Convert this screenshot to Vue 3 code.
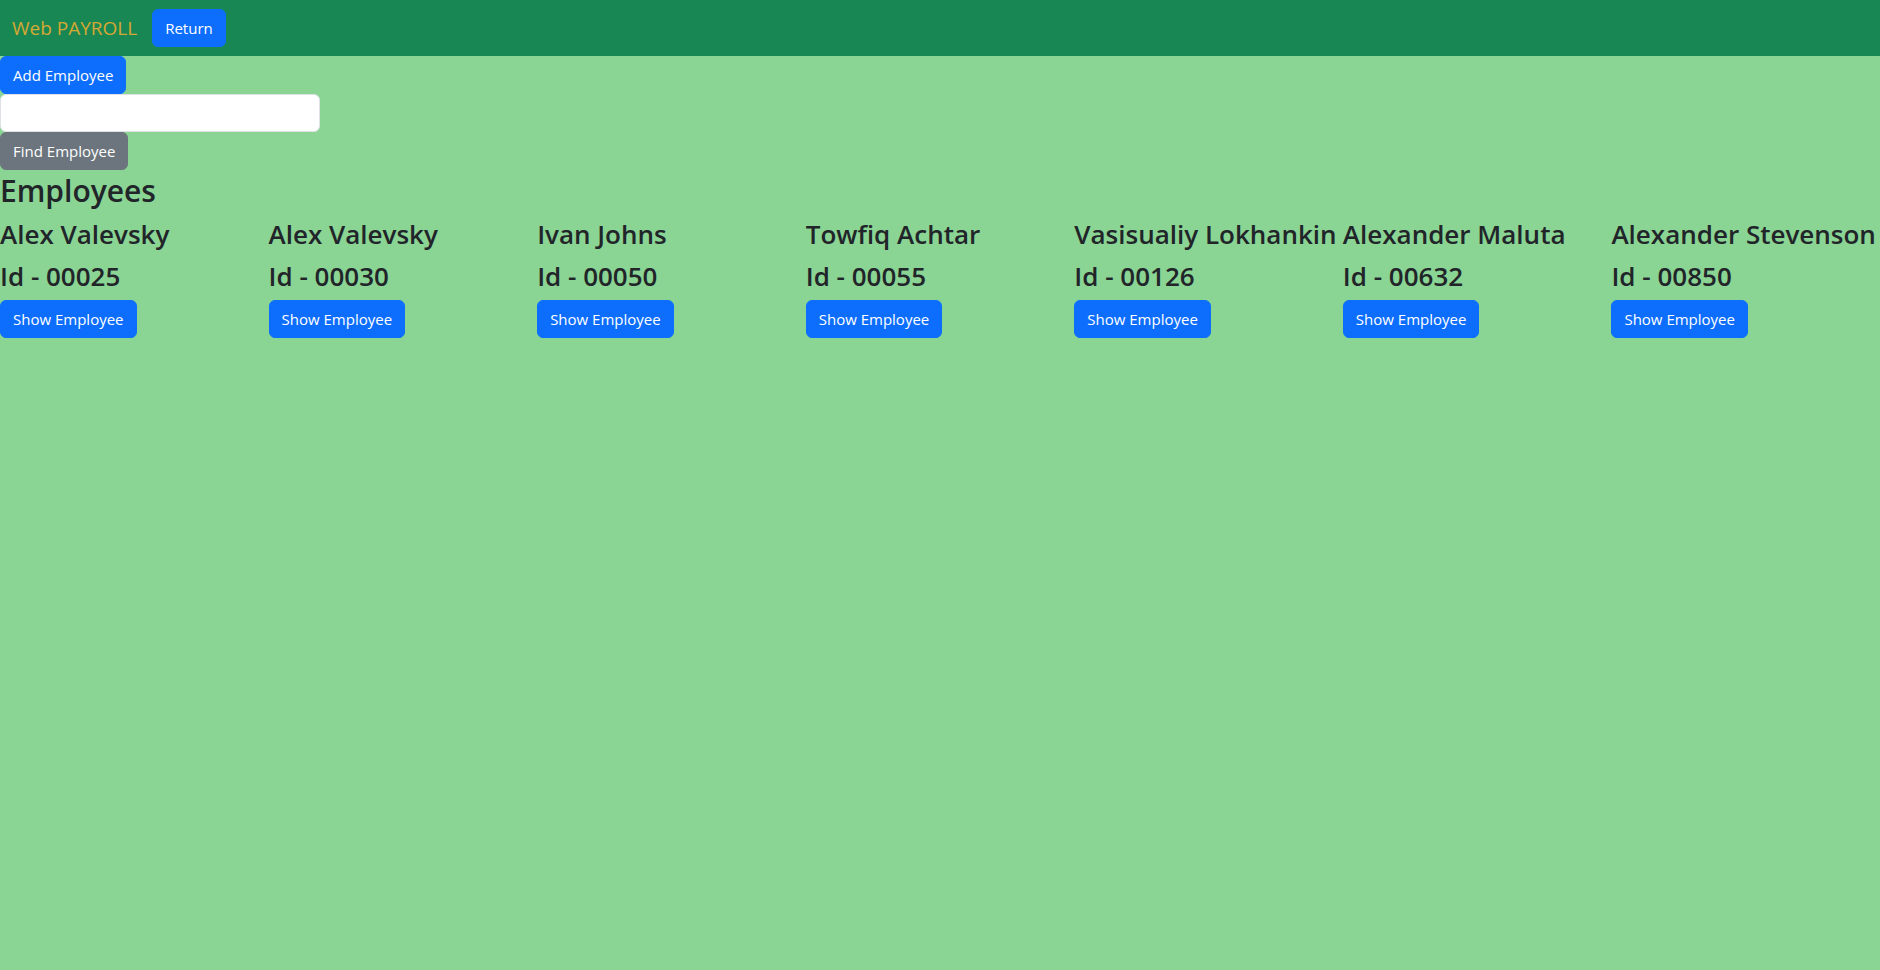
<script setup>
import { ref } from 'vue'

const query = ref('')
const employees = [
  { id: '00025', name: 'Alex Valevsky' },
  { id: '00030', name: 'Alex Valevsky' },
  { id: '00050', name: 'Ivan Johns' },
  { id: '00055', name: 'Towfiq Achtar' },
  { id: '00126', name: 'Vasisualiy Lokhankin' },
  { id: '00632', name: 'Alexander Maluta' },
  { id: '00850', name: 'Alexander Stevenson' },
]
</script>

<template>
  <div class="page">
    <nav class="navbar">
      <a class="brand" href="#">Web PAYROLL</a>
      <button class="btn primary" type="button">Return</button>
    </nav>
    <main>
      <div class="tools">
        <button class="btn primary" type="button">Add Employee</button>
        <input v-model="query" class="search" type="text" aria-label="Employee to find" />
        <button class="btn secondary" type="button">Find Employee</button>
      </div>
      <h2>Employees</h2>
      <div class="employees">
        <article v-for="employee in employees" :key="employee.id">
          <h3>{{ employee.name }}</h3>
          <h3>Id - {{ employee.id }}</h3>
          <button class="btn primary" type="button">Show Employee</button>
        </article>
      </div>
    </main>
  </div>
</template>

<style>
body {
  margin: 0;
  background: #8ad494;
}
</style>

<style scoped>
.page,
.btn,
.search {
  font-family: "Segoe UI", "Open Sans", "Noto Sans", sans-serif;
}
.page {
  color: #212529;
}
.navbar {
  display: flex;
  align-items: center;
  gap: 15px;
  padding: 9px 12px;
  background: #198754;
}
.brand {
  color: #d4a832;
  font-size: 19px;
  line-height: 30px;
  text-decoration: none;
}
.btn {
  box-sizing: border-box;
  padding: 6px 12px;
  border: 1px solid;
  border-radius: 6px;
  color: #fff;
  font-size: 15px;
  line-height: 24px;
  white-space: nowrap;
}
.primary {
  background: #0d6efd;
  border-color: #0d6efd;
}
.secondary {
  background: #6c757d;
  border-color: #6c757d;
}
.tools {
  display: flex;
  flex-direction: column;
  align-items: flex-start;
}
.search {
  box-sizing: border-box;
  width: 320px;
  max-width: 100%;
  height: 38px;
  padding: 6px 12px;
  border: 1px solid #dee2e6;
  border-radius: 6px;
  background: #fff;
  font-size: 15px;
}
h2,
h3 {
  margin: 0;
  font-weight: 600;
  white-space: nowrap;
}
h2 {
  margin-bottom: 4px;
  font-size: 30px;
  line-height: 42px;
}
h3 {
  margin-bottom: 6px;
  font-size: 26px;
  line-height: 36px;
}
.employees {
  display: grid;
  grid-template-columns: repeat(7, minmax(0, 1fr));
}
</style>
